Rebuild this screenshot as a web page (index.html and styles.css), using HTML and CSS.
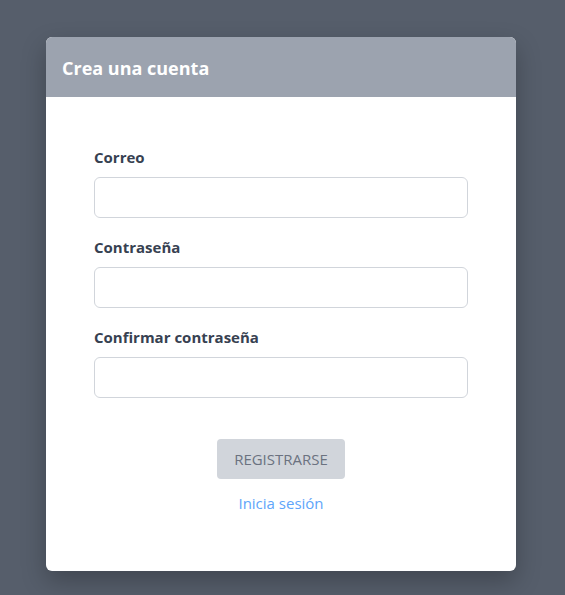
FILE: index.html
```html
<!DOCTYPE html>
<html lang="es">
<head>
<meta charset="utf-8">
<title>Crea una cuenta</title>
<link rel="stylesheet" href="styles.css">
</head>
<body>
<div class="card">
  <div class="card-header"><h1 class="title">Crea una cuenta</h1></div>
  <form class="card-body">
    <div class="field">
      <label class="label" for="email">Correo</label>
      <input class="input" id="email" type="email">
    </div>
    <div class="field">
      <label class="label" for="pass">Contraseña</label>
      <input class="input" id="pass" type="password">
    </div>
    <div class="field">
      <label class="label" for="pass2">Confirmar contraseña</label>
      <input class="input" id="pass2" type="password">
    </div>
    <div class="actions">
      <button class="btn" type="button">REGISTRARSE</button>
      <a class="link" href="#">Inicia sesión</a>
    </div>
  </form>
</div>
</body>
</html>
```
FILE: styles.css
```css
html, body {
  margin: 0;
  padding: 0;
}
body {
  background: #565e6b;
  font-family: "Open Sans", "Noto Sans", sans-serif;
  padding: 37px 0 0 46px;
  min-height: 595px;
  box-sizing: border-box;
}
.card {
  width: 470px;
  background: #ffffff;
  border-radius: 6px;
  overflow: hidden;
  box-shadow: 0 10px 25px rgba(0, 0, 0, 0.25);
}
.card-header {
  height: 60px;
  background: #9ca3af;
  display: flex;
  align-items: center;
  padding: 0 16px;
}
.title {
  margin: 0;
  font-size: 18px;
  font-weight: 700;
  color: #ffffff;
  line-height: 24px;
  padding-top: 2px;
}
.card-body {
  padding: 49px 48px 57px;
  display: flex;
  flex-direction: column;
}
.field {
  display: flex;
  flex-direction: column;
  margin-bottom: 18px;
}
.label {
  font-size: 15px;
  font-weight: 700;
  line-height: 22px;
  color: #374151;
  margin-bottom: 9px;
}
.input {
  height: 41px;
  box-sizing: border-box;
  border: 1px solid #d1d5db;
  border-radius: 6px;
  background: #fff;
  margin: 0;
}
.actions {
  margin-top: 23px;
  display: flex;
  flex-direction: column;
  align-items: center;
}
.btn {
  width: 128px;
  height: 40px;
  background: #d1d5db;
  color: #6b7280;
  border: none;
  border-radius: 4px;
  font-family: inherit;
  font-size: 15px;
  font-weight: 400;
  padding: 0;
}
.link {
  margin-top: 13px;
  color: #60a5fa;
  font-size: 15px;
  line-height: 22px;
  text-decoration: none;
}
```
